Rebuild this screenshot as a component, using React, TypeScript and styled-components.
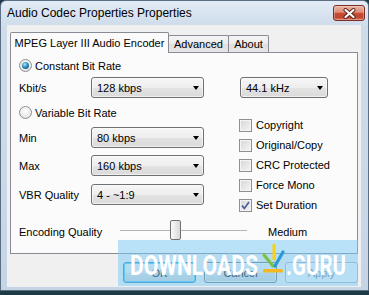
import React from 'react';
import styled, { createGlobalStyle } from 'styled-components';

const GlobalStyle = createGlobalStyle`
  html, body { margin: 0; padding: 0; }
  body {
    width: 369px;
    height: 295px;
    overflow: hidden;
    background: #1f3a47;
    font-family: 'Liberation Sans', Arial, sans-serif;
    font-size: 11px;
    color: #000;
  }
  * { box-sizing: border-box; }
`;

const Window = styled.div`
  position: relative;
  width: 369px;
  height: 291px;
  display: flex;
  flex-direction: column;
  border: 1px solid #5a6f84;
  border-radius: 6px 6px 0 0;
  background: linear-gradient(180deg, #e3ecf6 0px, #cfdcea 24px, #c6d5e6 100%);
`;

const TitleBar = styled.div`
  flex: 0 0 24px;
  display: flex;
  align-items: flex-start;
  justify-content: space-between;
  padding: 0 3px 0 6px;
`;

const Title = styled.span`
  font-size: 12px;
  line-height: 24px;
  color: #000;
`;

const CloseButton = styled.div`
  margin-top: 4px;
  width: 32px;
  height: 16px;
  display: flex;
  align-items: center;
  justify-content: center;
  border: 1px solid #7a2d22;
  border-radius: 3px;
  background: linear-gradient(180deg, #ecb2a4 0%, #dc8d78 45%, #c94c33 52%, #bd4630 80%, #d7745c 100%);
  box-shadow: inset 0 0 0 1px rgba(255, 255, 255, 0.3);
`;

const Client = styled.div`
  flex: 1;
  margin: 0 7px 3px 6px;
  padding: 7px 3px 0 3px;
  display: flex;
  flex-direction: column;
  background: #f0f0f0;
`;

const TabStrip = styled.div`
  position: relative;
  z-index: 1;
  height: 20px;
  display: flex;
  align-items: flex-end;
`;

const Tab = styled.div<{ $active?: boolean; $width: number }>`
  width: ${(p) => p.$width}px;
  height: ${(p) => (p.$active ? 21 : 17)}px;
  margin-bottom: ${(p) => (p.$active ? -1 : 0)}px;
  margin-left: ${(p) => (p.$active ? 0 : -1)}px;
  display: flex;
  align-items: center;
  justify-content: center;
  border: 1px solid #898c95;
  border-bottom: none;
  border-radius: 2px 2px 0 0;
  background: ${(p) =>
    p.$active
      ? '#fbfbfb'
      : 'linear-gradient(180deg, #f4f4f4 0%, #ececec 50%, #dfdfdf 51%, #e6e6e6 100%)'};
  white-space: nowrap;
`;

const Panel = styled.div`
  height: 202px;
  display: flex;
  flex-direction: column;
  padding: 4px 0 0 8px;
  border: 1px solid #898c95;
  background: #fbfbfb;
`;

const Options = styled.div`
  display: flex;
`;

const LeftColumn = styled.div`
  width: 185px;
  display: flex;
  flex-direction: column;
`;

const RightColumn = styled.div`
  margin-left: 36px;
  padding-top: 20px;
  display: flex;
  flex-direction: column;
`;

const OptionRow = styled.div<{ $top?: number }>`
  height: 17px;
  margin-top: ${(p) => p.$top ?? 0}px;
  display: flex;
  align-items: center;
  gap: 3px;
`;

const FieldRow = styled.div<{ $top?: number }>`
  height: 21px;
  margin-top: ${(p) => p.$top ?? 0}px;
  display: grid;
  grid-template-columns: 72px 113px;
  align-items: center;
`;

const Radio = styled.span<{ $checked?: boolean }>`
  flex: 0 0 13px;
  width: 13px;
  height: 13px;
  display: flex;
  align-items: center;
  justify-content: center;
  border: 1px solid #8e8f8f;
  border-radius: 50%;
  background: radial-gradient(circle at 50% 35%, #ffffff 0%, #e8e8e8 65%, #d2d2d2 100%);

  &::after {
    content: '';
    display: ${(p) => (p.$checked ? 'block' : 'none')};
    width: 7px;
    height: 7px;
    border-radius: 50%;
    background: radial-gradient(circle at 40% 35%, #b6e6f8 0%, #2f8cbd 45%, #0d4870 100%);
  }
`;

const Select = styled.div<{ $width?: number }>`
  width: ${(p) => (p.$width ? `${p.$width}px` : '100%')};
  height: 21px;
  display: flex;
  align-items: center;
  justify-content: space-between;
  padding: 0 4px 0 5px;
  border: 1px solid #707070;
  border-radius: 3px;
  background: linear-gradient(180deg, #f6f6f6 0%, #eeeeee 50%, #e3e3e3 51%, #dadada 100%);
  box-shadow: inset 0 0 0 1px rgba(255, 255, 255, 0.6);

  &::after {
    content: '';
    width: 0;
    height: 0;
    border-left: 3.5px solid transparent;
    border-right: 3.5px solid transparent;
    border-top: 4px solid #000;
  }
`;

const CheckList = styled.div`
  margin-top: 17px;
  display: flex;
  flex-direction: column;
`;

const CheckRow = styled.div`
  height: 20px;
  display: flex;
  align-items: center;
  gap: 4px;
  margin-left: -1px;
`;

const Checkbox = styled.span`
  flex: 0 0 13px;
  width: 13px;
  height: 13px;
  display: flex;
  align-items: center;
  justify-content: center;
  border: 1px solid #8e8f8f;
  background: linear-gradient(135deg, #d6d6d6 0%, #f6f6f6 100%);
  box-shadow: inset 0 0 0 1px #f4f4f4;
`;

const SliderRow = styled.div`
  height: 20px;
  margin-top: 7px;
  display: flex;
  align-items: center;
`;

const SliderLabel = styled.span`
  width: 101px;
`;

const SliderTrack = styled.div`
  position: relative;
  width: 127px;
  height: 20px;

  &::before {
    content: '';
    position: absolute;
    left: 0;
    right: 0;
    top: 8px;
    height: 2px;
    border-top: 1px solid #b4b4b4;
    border-bottom: 1px solid #ffffff;
  }
`;

const SliderThumb = styled.div`
  position: absolute;
  left: 50px;
  top: -2px;
  width: 11px;
  height: 20px;
  border: 1px solid #707070;
  border-radius: 2px;
  background: linear-gradient(90deg, #fafafa 0%, #e6e6e6 60%, #d8d8d8 100%);
`;

const SliderValue = styled.span`
  margin-left: 21px;
`;

const ButtonBar = styled.div`
  margin-top: 8px;
  display: flex;
  justify-content: flex-end;
  gap: 8px;
`;

const Button = styled.button<{ $default?: boolean }>`
  width: 73px;
  height: 21px;
  padding: 0;
  font-family: inherit;
  font-size: 11px;
  color: ${(p) => (p.disabled ? '#838383' : '#000')};
  border: 1px solid ${(p) => (p.$default ? '#3c7fb1' : p.disabled ? '#adb2b5' : '#707070')};
  border-radius: 3px;
  background: ${(p) =>
    p.disabled
      ? '#f4f4f4'
      : 'linear-gradient(180deg, #f2f2f2 0%, #ebebeb 50%, #dddddd 51%, #cfcfcf 100%)'};
  box-shadow: ${(p) => (p.$default ? 'inset 0 0 0 1px #48d0f4' : 'inset 0 0 0 1px rgba(255,255,255,0.7)')};
`;

const Watermark = styled.svg`
  position: absolute;
  left: 117px;
  top: 239px;
  width: 240px;
  height: 46px;
  pointer-events: none;
`;

const WatermarkText = styled.text`
  font-family: Roboto, 'Liberation Sans', sans-serif;
  font-weight: 700;
  font-size: 27px;
  fill: #ffffff;
`;

const checks = [
  { label: 'Copyright', checked: false },
  { label: 'Original/Copy', checked: false },
  { label: 'CRC Protected', checked: false },
  { label: 'Force Mono', checked: false },
  { label: 'Set Duration', checked: true },
];

export default function App() {
  return (
    <>
      <GlobalStyle />
      <Window>
        <TitleBar>
          <Title>Audio Codec Properties Properties</Title>
          <CloseButton>
            <svg width="13" height="11" viewBox="0 0 13 11">
              <path d="M2.5 2 L10.5 9 M10.5 2 L2.5 9" stroke="#5a1f16" strokeWidth="4" strokeLinecap="round" />
              <path d="M2.5 2 L10.5 9 M10.5 2 L2.5 9" stroke="#ffffff" strokeWidth="2.2" strokeLinecap="round" />
            </svg>
          </CloseButton>
        </TitleBar>

        <Client>
          <TabStrip>
            <Tab $active $width={159}>MPEG Layer III Audio Encoder</Tab>
            <Tab $width={61}>Advanced</Tab>
            <Tab $width={41}>About</Tab>
          </TabStrip>

          <Panel>
            <Options>
              <LeftColumn>
                <OptionRow>
                  <Radio $checked />
                  Constant Bit Rate
                </OptionRow>
                <FieldRow $top={3}>
                  <span>Kbit/s</span>
                  <Select>128 kbps</Select>
                </FieldRow>
                <OptionRow $top={6}>
                  <Radio />
                  Variable Bit Rate
                </OptionRow>
                <FieldRow $top={6}>
                  <span>Min</span>
                  <Select>80 kbps</Select>
                </FieldRow>
                <FieldRow $top={7}>
                  <span>Max</span>
                  <Select>160 kbps</Select>
                </FieldRow>
                <FieldRow $top={8}>
                  <span>VBR Quality</span>
                  <Select>4 - ~1:9</Select>
                </FieldRow>
              </LeftColumn>

              <RightColumn>
                <Select $width={88}>44.1 kHz</Select>
                <CheckList>
                  {checks.map((c) => (
                    <CheckRow key={c.label}>
                      <Checkbox>
                        {c.checked && (
                          <svg width="9" height="9" viewBox="0 0 9 9">
                            <path d="M1 4.6 L3.4 7.4 L8 1" fill="none" stroke="#4a5f98" strokeWidth="1.7" />
                          </svg>
                        )}
                      </Checkbox>
                      {c.label}
                    </CheckRow>
                  ))}
                </CheckList>
              </RightColumn>
            </Options>

            <SliderRow>
              <SliderLabel>Encoding Quality</SliderLabel>
              <SliderTrack>
                <SliderThumb />
              </SliderTrack>
              <SliderValue>Medium</SliderValue>
            </SliderRow>
          </Panel>

          <ButtonBar>
            <Button $default>OK</Button>
            <Button>Cancel</Button>
            <Button disabled>Apply</Button>
          </ButtonBar>
        </Client>

        <Watermark viewBox="0 0 240 46">
          <rect x="0" y="0" width="240" height="46" fill="rgba(120, 200, 245, 0.5)" />
          <WatermarkText x="12" y="35" textLength="128" lengthAdjust="spacingAndGlyphs">
            DOWNLOADS
          </WatermarkText>
          <path d="M146 15 L155 26" stroke="#7cc242" strokeWidth="3.2" strokeLinecap="round" />
          <path d="M165 12 L157 26" stroke="#2a9ad6" strokeWidth="3.2" strokeLinecap="round" />
          <path d="M156 5 L156 19" stroke="#f6d21e" strokeWidth="3.2" strokeLinecap="round" />
          <rect x="145" y="29" width="20" height="3.5" rx="1.5" fill="#f7b71f" />
          <WatermarkText x="168" y="35" textLength="60" lengthAdjust="spacingAndGlyphs">
            .GURU
          </WatermarkText>
        </Watermark>
      </Window>
    </>
  );
}
